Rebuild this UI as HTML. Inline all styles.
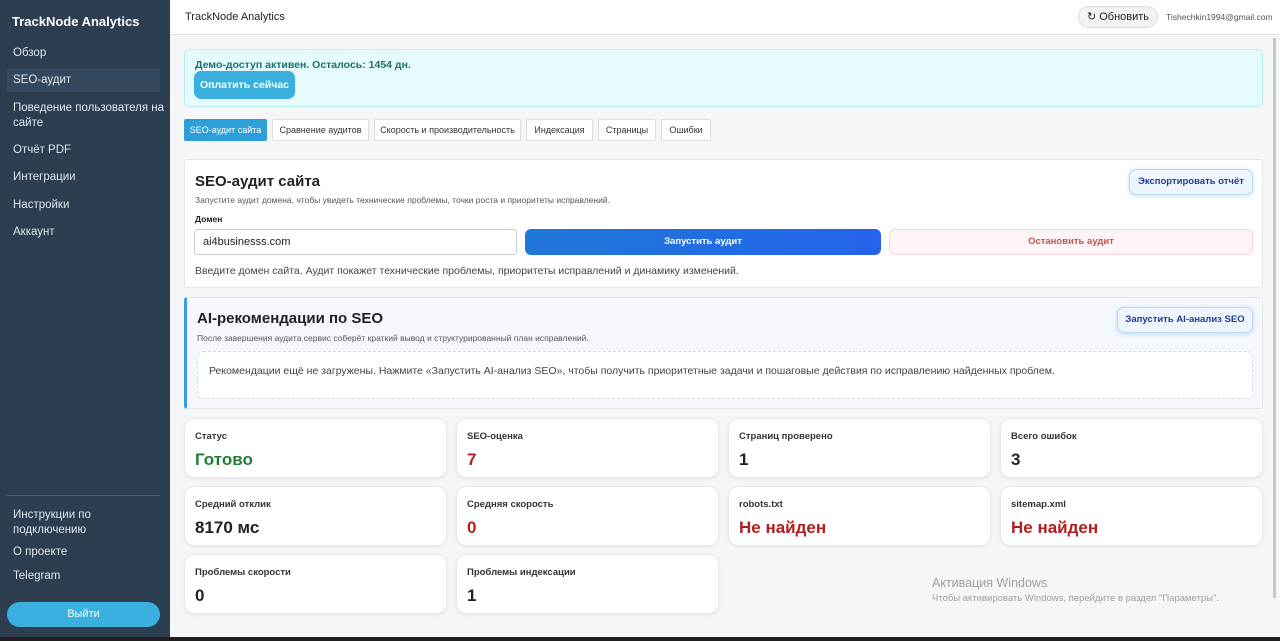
<!DOCTYPE html><html><head><meta charset="utf-8"><style>
*{box-sizing:border-box;margin:0;padding:0}
body{width:1280px;height:641px;overflow:hidden;font-family:"Liberation Sans","Noto Sans CJK SC",sans-serif;background:#f5f6f7;color:#222;position:relative}
.sb{position:absolute;left:0;top:0;width:170px;height:641px;background:#2c3e50;color:#e8edf2}
.sb .logo{position:absolute;left:12px;top:14px;font-weight:bold;font-size:13px;color:#fff}
.sb .it{position:absolute;left:13px;font-size:11.5px;color:#dfe6ec;line-height:15px}
.sb .act{position:absolute;left:7px;top:69px;width:153px;height:23px;background:#34495e}
.sb hr{position:absolute;left:7px;top:495px;width:153px;border:0;border-top:1px solid #4a5d70}
.out{position:absolute;left:7px;top:602px;width:153px;height:25px;border-radius:13px;background:#3bb0e0;color:#fff;font-size:11px;text-align:center;line-height:25px}
.top{position:absolute;left:170px;top:0;right:0;height:35px;background:#fff;border-bottom:1px solid #e3e3e3}
.abs{position:absolute}
.card{position:absolute;background:#fff;border:1px solid #e4e6e8;border-radius:3px}
.tab{position:absolute;top:119px;height:22px;border:1px solid #ddd;background:#fff;font-size:9px;line-height:20px;text-align:center;border-radius:2px;color:#333}
.st{position:absolute;width:263px;height:60px;background:#fff;border:1px solid #e6e8ea;border-radius:10px;box-shadow:0 1px 3px rgba(0,0,0,.06)}
.st .l{position:absolute;left:10px;top:12px;font-size:9.5px;font-weight:bold;color:#333}
.st .v{position:absolute;left:10px;top:31px;font-size:17px;font-weight:bold;color:#222}
.g{color:#1e7e34!important}.r{color:#b21f1f!important}
</style></head><body>
<div class="sb"><div class="logo">TrackNode Analytics</div><div class="act"></div>
<div class="it" style="top:46px">Обзор</div><div class="it" style="top:73px">SEO-аудит</div>
<div class="it" style="top:101px">Поведение пользователя на<br>сайте</div><div class="it" style="top:143px">Отчёт PDF</div>
<div class="it" style="top:170px">Интеграции</div><div class="it" style="top:198px">Настройки</div><div class="it" style="top:225px">Аккаунт</div>
<hr><div class="it" style="top:508px">Инструкции по<br>подключению</div><div class="it" style="top:545px">О проекте</div><div class="it" style="top:569px">Telegram</div>
<div class="out">Выйти</div></div>
<div class="top"><div class="abs" style="left:15px;top:11px;font-size:11px">TrackNode Analytics</div>
<div class="abs" style="left:908px;top:6px;width:80px;height:22px;border:1px solid #ddd;border-radius:11px;background:#f3f3f3;font-size:11px;text-align:center;line-height:20px">↻ Обновить</div>
<div class="abs" style="left:996px;top:12px;font-size:8.5px;color:#555">Tishechkin1994@gmail.com</div></div>
<div class="abs" style="left:184px;top:49px;width:1079px;height:58px;background:#e6fbfd;border:1px solid #b8ecf3;border-radius:5px"></div>
<div class="abs" style="left:195px;top:59px;font-size:10.5px;font-weight:bold;color:#1e6f6a">Демо-доступ активен. Осталось: 1454 дн.</div>
<div class="abs" style="left:194px;top:71px;width:101px;height:28px;border-radius:7px;background:#3ab0de;color:#fff;font-size:10.5px;font-weight:bold;text-align:center;line-height:28px">Оплатить сейчас</div>
<div class="tab" style="left:184px;width:83px;background:#2e9fd8;color:#fff;border-color:#2e9fd8">SEO-аудит сайта</div>
<div class="tab" style="left:272px;width:97px">Сравнение аудитов</div>
<div class="tab" style="left:374px;width:147px">Скорость и производительность</div>
<div class="tab" style="left:526px;width:67px">Индексация</div>
<div class="tab" style="left:598px;width:58px">Страницы</div>
<div class="tab" style="left:661px;width:50px">Ошибки</div>
<div class="card" style="left:184px;top:159px;width:1079px;height:129px"></div>
<div class="abs" style="left:195px;top:173px;font-size:15px;font-weight:bold">SEO-аудит сайта</div>
<div class="abs" style="left:195px;top:195px;font-size:8.5px;color:#555">Запустите аудит домена, чтобы увидеть технические проблемы, точки роста и приоритеты исправлений.</div>
<div class="abs" style="left:1129px;top:169px;width:124px;height:26px;border:1px solid #bcd8f5;background:#eef5fd;border-radius:7px;font-size:9.5px;font-weight:bold;color:#1e3f8a;text-align:center;line-height:24px;box-shadow:0 1px 5px rgba(60,150,230,.3)">Экспортировать отчёт</div>
<div class="abs" style="left:195px;top:214px;font-size:8.5px;font-weight:bold">Домен</div>
<div class="abs" style="left:194px;top:229px;width:323px;height:26px;border:1px solid #ccc;border-radius:3px;background:#fff;font-size:11px;padding:6px 8px">ai4businesss.com</div>
<div class="abs" style="left:525px;top:229px;width:356px;height:26px;border-radius:6px;background:linear-gradient(90deg,#1f78d8,#2563eb);color:#fff;font-size:9.5px;font-weight:bold;text-align:center;line-height:26px">Запустить аудит</div>
<div class="abs" style="left:889px;top:229px;width:364px;height:26px;border:1px solid #f4d4d4;border-radius:6px;background:#fdf5f5;color:#c05454;font-size:9.5px;font-weight:bold;text-align:center;line-height:24px">Остановить аудит</div>
<div class="abs" style="left:195px;top:265px;font-size:10.5px;color:#444">Введите домен сайта. Аудит покажет технические проблемы, приоритеты исправлений и динамику изменений.</div>
<div class="card" style="left:184px;top:297px;width:1079px;height:112px;border-left:3px solid #3a9be6;background:#f4f8fd"></div>
<div class="abs" style="left:197px;top:310px;font-size:15px;font-weight:bold">AI-рекомендации по SEO</div>
<div class="abs" style="left:197px;top:333px;font-size:8.5px;color:#555">После завершения аудита сервис соберёт краткий вывод и структурированный план исправлений.</div>
<div class="abs" style="left:1117px;top:307px;width:136px;height:26px;border:1px solid #bcd8f5;background:#eef5fd;border-radius:7px;font-size:9.5px;font-weight:bold;color:#1e3f8a;text-align:center;line-height:24px;box-shadow:0 1px 5px rgba(60,150,230,.3)">Запустить AI-анализ SEO</div>
<div class="abs" style="left:197px;top:351px;width:1056px;height:48px;border:1px dashed #d6dde6;border-radius:6px;background:#fff;font-size:10.5px;color:#444;padding:13px 11px">Рекомендации ещё не загружены. Нажмите «Запустить AI-анализ SEO», чтобы получить приоритетные задачи и пошаговые действия по исправлению найденных проблем.</div>
<div class="st" style="left:184px;top:418px"><div class="l">Статус</div><div class="v g">Готово</div></div>
<div class="st" style="left:456px;top:418px"><div class="l">SEO-оценка</div><div class="v r">7</div></div>
<div class="st" style="left:728px;top:418px"><div class="l">Страниц проверено</div><div class="v">1</div></div>
<div class="st" style="left:1000px;top:418px"><div class="l">Всего ошибок</div><div class="v">3</div></div>
<div class="st" style="left:184px;top:486px"><div class="l">Средний отклик</div><div class="v">8170 мс</div></div>
<div class="st" style="left:456px;top:486px"><div class="l">Средняя скорость</div><div class="v r">0</div></div>
<div class="st" style="left:728px;top:486px"><div class="l">robots.txt</div><div class="v r">Не найден</div></div>
<div class="st" style="left:1000px;top:486px"><div class="l">sitemap.xml</div><div class="v r">Не найден</div></div>
<div class="st" style="left:184px;top:554px"><div class="l">Проблемы скорости</div><div class="v">0</div></div>
<div class="st" style="left:456px;top:554px"><div class="l">Проблемы индексации</div><div class="v">1</div></div>
<div class="abs" style="left:932px;top:576px;font-size:12.5px;color:#9aa0a6">Активация Windows</div>
<div class="abs" style="left:932px;top:593px;font-size:9.5px;color:#9aa0a6">Чтобы активировать Windows, перейдите в раздел "Параметры".</div>
<div class="abs" style="left:1273px;top:38px;width:3px;height:560px;background:#c8c8c8"></div>
<div class="abs" style="left:0;top:637px;width:1280px;height:4px;background:#1e1e1e"></div>
</body></html>
